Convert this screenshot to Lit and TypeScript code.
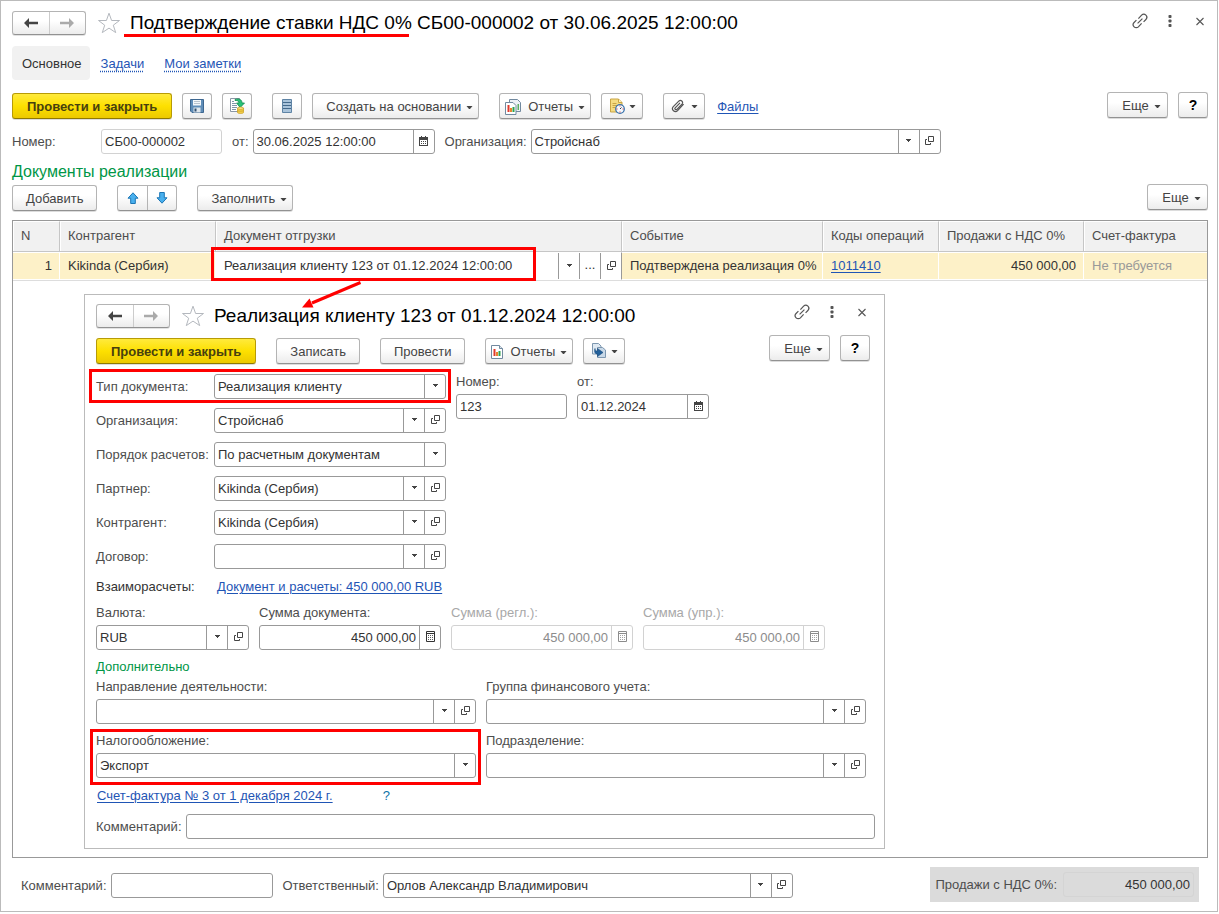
import { LitElement, html, css, svg, nothing, TemplateResult } from "lit";
import { customElement } from "lit/decorators.js";
import { classMap } from "lit/directives/class-map.js";

type Addon = "drop" | "more" | "open" | "calendar" | "calc";

interface FieldOptions {
  id: string;
  label?: string;
  value?: string;
  size: string;
  addons?: Addon[];
  stacked?: boolean;
  wideLabel?: string;
  right?: boolean;
  pale?: boolean;
  disabled?: boolean;
}

const icon = (w: number, h: number, body: unknown) =>
  html`<svg class="icon" width=${w} height=${h} viewBox="0 0 ${w} ${h}" aria-hidden="true">${body}</svg>`;

const icons = {
  back: icon(14, 10, svg`<path d="M0 5 5 0v3.7h9v2.6H5V10z" fill="#444"/>`),
  forward: icon(14, 10, svg`<path d="M14 5 9 0v3.7H0v2.6h9V10z" fill="#aaa"/>`),
  star: icon(24, 22, svg`<path d="M12 1.2 14.6 8.5H22.5L16.3 13.2 18.7 20.6 12 16.1 5.3 20.6 7.7 13.2 1.5 8.5H9.4z" fill="#fff" stroke="#b4b8be"/>`),
  link: icon(16, 16, svg`<g fill="none" stroke="#555" stroke-width="1.2"><path d="M6.400 5.600 9.600 2.200a3 3 0 0 1 4.300 4.300L11.600 8.800"/><path d="M9.600 10.400 6.400 13.800a3 3 0 0 1-4.300-4.300L4.400 7.200"/><path d="M5.600 10.400l4.800-4.800"/></g>`),
  dots: icon(16, 16, svg`<g fill="#555"><rect x="6.500" y="2" width="3" height="3" rx=".8"/><rect x="6.500" y="6.500" width="3" height="3" rx=".8"/><rect x="6.500" y="11" width="3" height="3" rx=".8"/></g>`),
  close: icon(16, 16, svg`<path d="M4.500 5l7 7M11.500 5l-7 7" stroke="#555" stroke-width="1.100"/>`),
  caret: icon(7, 4, svg`<path d="M.5 0h6L4 3H3z" fill="#444"/>`),
  smallCaret: icon(5, 3, svg`<path d="M0 0h5v1H4v1H3v1H2V2H1V1H0z" fill="#444"/>`),
  open: icon(9, 9, svg`<g fill="none" stroke="#444"><path d="M3.500.5h5v5h-5z"/><path d="M2 3.500H.5v5h5V7"/></g>`),
  calendar: icon(9, 10, svg`<path d="M0 1h9v9H0z" fill="#444"/><path d="M1 4h7v5H1z" fill="#fff"/><path d="M2 0h1v2H2zM6 0h1v2H6z" fill="#444"/><path d="M2 5h1v1H2zM4 5h1v1H4zM6 5h1v1H6zM2 7h1v1H2zM4 7h1v1H4zM6 7h1v1H6z" fill="#444"/>`),
  calc: icon(9, 11, svg`<path d="M.5.5h8v10h-8z" fill="none" stroke="currentColor"/><path d="M1 2h7v1H1z" fill="currentColor"/><path d="M2 4h1v1H2zM4 4h1v1H4zM6 4h1v1H6zM2 6h1v1H2zM4 6h1v1H4zM6 6h1v1H6zM2 8h1v1H2zM4 8h1v1H4zM6 8h1v1H6z" fill="currentColor" opacity=".8"/>`),
  save: icon(14, 14, svg`<path d="M.5.5h13v13H2L.5 12z" fill="#5f8db8" stroke="#3d6790"/><path d="M3 1h8v5.500H3z" fill="#f4f7fa"/><path d="M4 2.500h6M4 4.500h6" stroke="#b9c4cf"/><path d="M3.500 8.500h7v5h-7z" fill="#dfe6ec"/><path d="M4.500 9.500h2v3h-2z" fill="#2f4f70"/>`),
  post: icon(16, 16, svg`<path d="M1.500.5h9v13h-9z" fill="#fff" stroke="#8a97a5"/><path d="M3 3.500h2M3 5.500h4M3 7.500h5M3 9.500h5M3 11.500h4" stroke="#8195aa"/><path d="M6 1.500c4-1.500 7 0 7 3.500h2.500L11.200 9.500 7.500 5H10c0-1.800-1-2.700-4-2.500z" fill="#27c277" stroke="#128a4e" stroke-width=".8"/><path d="M8.500 10v4.500c0 1.300 6 1.300 6 0V10z" fill="#f2cf4a" stroke="#c89b1e" stroke-width=".7"/><ellipse cx="11.500" cy="10.200" rx="3" ry="1.100" fill="#ffec97" stroke="#c89b1e" stroke-width=".7"/><path d="M8.500 12.300c0 1.200 6 1.200 6 0" fill="none" stroke="#c89b1e" stroke-width=".7"/>`),
  register: icon(10, 14, svg`<path d="M.5.5h9v13h-9z" fill="#a9c3da" stroke="#5f84a5"/><path d="M1 3.500h8M1 6.500h8M1 9.500h8" stroke="#44698b" stroke-width="1.200"/>`),
  report: icon(12, 14, svg`<path d="M.5.5h8l3 3v10H.5z" fill="#fff" stroke="#71899f"/><path d="M8.500.5v3h3" fill="#dde5ec" stroke="#71899f"/><path d="M2.500 4h2v7h-2z" fill="#e03a2d"/><path d="M5 7h2v4H5z" fill="#e8862e"/><path d="M7.500 6h2v5h-2z" fill="#2ea44f"/>`),
  reports: icon(16, 16, svg`<path d="M4.500.5h8l3 3v9h-11z" fill="#eef2f6" stroke="#71899f"/><path d="M12.500 5h1.500v6h-1.500z" fill="#5cae64"/><path d="M.5 3.500h7.500l3 3v9H.5z" fill="#fff" stroke="#71899f"/><path d="M2.500 6h2v7h-2z" fill="#e03a2d"/><path d="M5 9h2v4H5z" fill="#e8862e"/><path d="M7.500 8h2v5h-2z" fill="#2ea44f"/>`),
  reminder: icon(16, 16, svg`<path d="M1.500 1h8L13 4.500V14H1.500z" fill="#f5dc82" stroke="#c9a545"/><path d="M9.500 1v3.500H13" fill="#fff2bd" stroke="#c9a545"/><path d="M3.500 5.500h4M3.500 7.500h5M3.500 9.500h3" stroke="#c9a545"/><circle cx="11" cy="11" r="4.300" fill="#f5fafe" stroke="#3c74ad" stroke-width="1.300"/><path d="M11 11l1.500-1.500" stroke="#334" fill="none"/><path d="M10.500 7.500h1v1h-1zM10.500 13.500h1v1h-1zM7.500 10.500h1v1h-1zM13.500 10.500h1v1h-1z" fill="#d33"/>`),
  clip: icon(14, 14, svg`<path d="M12.600 5.200 6.600 11.600a2.900 2.900 0 0 1-4.300-3.900L8 1.900a2.200 2.200 0 0 1 3.200 2.900L5.900 10.300a1.100 1.100 0 0 1-1.700-1.500L9 3.900" fill="none" stroke="#555" stroke-width="1.200"/>`),
  send: icon(16, 16, svg`<path d="M1.500.5h6l2.500 2.500v8h-8.500z" fill="#dfe9f2" stroke="#7d97b0"/><path d="M6.500 4.500h5l3 2.500v7.500h-8z" fill="#c9d9e8" stroke="#7d97b0"/><path d="M4 5.500c0 2 .8 2.500 2.500 2.500V5.500L12 9.500l-5.500 4V11C4 11 3 9 4 5.500z" fill="#24619b" stroke="#174a7c" stroke-width=".6"/>`),
  up: icon(12, 12, svg`<path d="M6 .8 11 6.200H8.300v5.300H3.700V6.200H1z" fill="#49b0ee" stroke="#1b76b5"/>`),
  down: icon(12, 12, svg`<path d="M6 11.200 11 5.800H8.300V.5H3.700v5.300H1z" fill="#49b0ee" stroke="#1b76b5"/>`),
  arrow: icon(64, 30, svg`<path d="M60.500 1.500 12 22" stroke="#f00" stroke-width="3"/><path d="M2 26.500 9.500 17.500 13.500 26.500z" fill="#f00"/>`),
};

const addonTitles: Record<Addon, string> = {
  drop: "Выбрать из списка",
  more: "Показать все",
  open: "Открыть",
  calendar: "Календарь",
  calc: "Калькулятор",
};

const addonIcons: Record<Addon, unknown> = {
  drop: icons.smallCaret,
  more: "...",
  open: icons.open,
  calendar: icons.calendar,
  calc: icons.calc,
};

@customElement("app-root")
export class AppRoot extends LitElement {
  static styles = css`
    :host {
      display: block;
      box-sizing: border-box;
      min-height: 100vh;
      padding: 0 1px 2px 0;
      background: #fff;
      color: #4d4d4d;
      font: 13px/16px "Liberation Sans", Arial, sans-serif;
    }
    * { box-sizing: border-box; }
    button, input, select { font: inherit; color: inherit; margin: 0; }
    .icon { display: block; flex: none; }
    a { color: #1f55b5; text-underline-offset: 2px; }

    .page {
      display: flex;
      flex-direction: column;
      border: 1px solid #bbb;
      padding: 10px 9px 9px 11px;
    }
    .head { display: flex; align-items: flex-start; min-height: 24px; }
    .nav, .updown {
      display: flex;
      border: 1px solid #b4b4b4;
      border-bottom-color: #929292;
      border-radius: 3px;
      background: linear-gradient(#fff 40%, #ececec);
      box-shadow: 0 1px 0 #e2e2e2;
    }
    .nav { width: 74px; height: 24px; }
    .updown { width: 60px; height: 26px; }
    .nav button, .updown button {
      flex: 1;
      display: grid;
      place-items: center;
      padding: 0;
      border: 0;
      background: none;
    }
    .nav button + button { border-left: 1px solid #ccc; }
    .updown button + button { border-left: 1px solid #b4b4b4; }
    .star { margin: 1px 9px 0 11px; padding: 0; border: 0; background: none; }
    h1 {
      flex: 1;
      margin: 0;
      color: #000;
      font-size: 19px;
      line-height: 24px;
      font-weight: 400;
    }
    .marked { position: relative; }
    .marked::after {
      content: "";
      position: absolute;
      left: -6px;
      right: 3px;
      bottom: -4px;
      height: 3px;
      background: #f00;
    }
    .tools { display: flex; gap: 14px; padding-top: 2px; }
    .tools button { padding: 0; border: 0; background: none; }

    .tabs { display: flex; align-items: center; gap: 20px; margin-top: 11px; }
    .tab-current {
      padding: 10px 8px 8px 10px;
      margin-right: -9px;
      border-radius: 4px;
      background: #f1f1f1;
      color: #333;
    }
    .tabs a { padding-top: 2px; text-decoration: underline dotted; text-underline-offset: 3px; }

    .toolbar { display: flex; justify-content: space-between; align-items: flex-start; }
    .page > .toolbar { margin-top: 12px; }
    .page > h2 + .toolbar { margin-top: 2px; }
    .group { display: flex; align-items: center; gap: 10px; padding-top: 1px; }
    .group.right { padding-top: 0; }
    .sep { margin-left: 10px; }
    .btn {
      display: flex;
      align-items: center;
      justify-content: center;
      height: 26px;
      min-width: 61px;
      padding: 1px 13px 0;
      border: 1px solid #b4b4b4;
      border-bottom-color: #929292;
      border-radius: 3px;
      background: linear-gradient(#fff 40%, #ececec);
      box-shadow: 0 1px 0 #dcdcdc;
      color: #444;
      white-space: nowrap;
    }
    .btn .caret { margin: 2px -8px 0 5px; }
    .btn .lead { margin: 0 7px 0 -8px; }
    .btn.square { width: 30px; min-width: 30px; padding: 0; }
    .btn.pair { width: 42px; min-width: 42px; padding: 0 6px 0 7px; justify-content: space-between; }
    .btn.pair .caret { margin: 2px 0 0; }
    .btn.help { color: #000; font-weight: 700; font-size: 14px; }
    .btn.main {
      padding: 1px 14px 0;
      border-color: #b79b06;
      border-bottom-color: #8f7900;
      background: linear-gradient(#ffea3c, #fde000 50%, #ecc900);
      color: #47400f;
      font-weight: 700;
    }
    .files { margin-left: 2px; padding-top: 1px; }

    .fields { display: flex; gap: 10px; margin-top: 10px; }
    h2 { margin: 8px 0 0; color: #009646; font-size: 16px; line-height: 20px; font-weight: 400; }

    .field { display: flex; align-items: center; gap: 4px; min-width: 0; }
    .field.stacked { flex-direction: column; align-items: stretch; }
    .field label { white-space: nowrap; }
    .field.label-number label { min-width: 85px; }
    .field.label-form label { min-width: 114px; }
    .box {
      display: flex;
      min-width: 0;
      height: 25px;
      border: 1px solid #999;
      border-radius: 3px;
      background: #fff;
      color: #333;
      overflow: hidden;
    }
    .box input, .box select {
      flex: 1;
      min-width: 0;
      width: 100%;
      height: 23px;
      padding: 0 3px;
      border: 0;
      outline: 0;
      background: none;
      appearance: none;
    }
    .box.right input { text-align: right; }
    .box.pale { border-color: #d2d2d2; }
    .box.disabled { border-color: #d2d2d2; color: #8c8c8c; }
    .box.disabled .addon { border-color: #d2d2d2; }
    .field.off label { color: #a8a8a8; }
    .addon {
      flex: none;
      width: 21px;
      display: grid;
      place-items: center;
      padding: 0 0 2px;
      border: 0;
      border-left: 1px solid #999;
      background: none;
      color: inherit;
      line-height: 16px;
    }
    .choice { display: grid; }
    .choice > * { grid-area: 1 / 1; }
    .choice .addon { justify-self: end; pointer-events: none; }
    .w-number { width: 121px; }
    .w-stamp { width: 182px; }
    .w-long { width: 410px; }
    .w-form { width: 232px; }
    .w-short { width: 111px; }
    .w-date { width: 132px; }
    .w-currency { width: 153px; }
    .w-comment { width: 162px; }
    .w-fill { width: 100%; }

    .panel { margin-top: 9px; border: 1px solid #999; }
    table { width: 100%; border-collapse: separate; border-spacing: 0; table-layout: fixed; }
    th, td { padding: 0 7px 0 8px; text-align: left; font-weight: 400; white-space: nowrap; }
    th {
      height: 31px;
      padding-bottom: 1px;
      border-top: 1px solid #fff;
      border-bottom: 1px solid #c6c6c6;
      border-right: 1px solid #c6c6c6;
      background: #f1f1f1;
      box-shadow: inset 1px 0 0 #fff;
    }
    td {
      height: 28px;
      border: 0 solid #fff;
      border-width: 1px 1px 1px 0;
      background: #fdf1c8;
      box-shadow: 0 1px 0 #ddd;
      color: #333;
    }
    th:last-child, td:last-child { border-right: 0; }
    td.num { text-align: right; }
    td.muted { color: #999; }
    td.edit { position: relative; padding: 0; background: #fff; border-right-color: #999; }
    .cell { display: flex; height: 26px; }
    .cell input { flex: 1; min-width: 0; padding: 0 8px; border: 0; outline: 0; background: none; }
    .c-n { width: 47px; }
    .c-agent { width: 156px; }
    .c-doc { width: 406px; }
    .c-event { width: 201px; }
    .c-code { width: 116px; }
    .c-sales { width: 145px; }
    .frame { position: absolute; border: 3px solid #f00; pointer-events: none; }
    .frame-doc { inset: -6px 85px -2px -5px; }
    .pointer { position: absolute; left: 84px; top: 28px; z-index: 2; pointer-events: none; }

    .canvas { padding: 14px 8px 8px 71px; }
    .window {
      max-width: 801px;
      padding: 9px 9px 9px 11px;
      border: 1px solid #bbb;
      background: #fff;
    }
    .window .tools { padding: 0 5px 0 0; }
    .window .toolbar { margin-top: 7px; padding-right: 5px; }
    .window .group { padding-top: 3px; }
    .window .group.right { padding-top: 0; }
    .form { display: flex; gap: 10px; margin-top: 10px; }
    .rows { display: flex; flex-direction: column; gap: 9px; }
    .pairs { display: flex; gap: 10px; align-items: flex-start; }
    .highlight { position: relative; }
    .frame-type { inset: -5px -5px -4px -7px; }
    .frame-tax { inset: -4px -5px -7px -6px; }
    .link-row { display: flex; margin-top: 10px; color: #333; }
    .settle { min-width: 121px; }
    .sums { display: flex; gap: 10px; margin-top: 10px; }
    h3 { margin: 9px 0 4px; color: #009646; font: inherit; }
    .grid {
      display: grid;
      grid-template-columns: 1fr 1fr;
      gap: 9px 10px;
      padding-right: 9px;
    }
    .invoice { padding-left: 1px; gap: 50px; }
    .invoice .hint { color: #0d72a8; padding: 0; border: 0; background: none; }
    .note { margin-top: 10px; }

    .footer { display: flex; justify-content: space-between; align-items: flex-start; padding: 9px 9px 0; }
    .footer .fields { margin-top: 6px; }
    .total {
      display: flex;
      align-items: center;
      gap: 6px;
      padding: 5px;
      background: #dbdbdb;
    }
    .total output {
      width: 131px;
      padding: 4px 3px 3px;
      border: 1px solid #d4d4d4;
      border-radius: 3px;
      text-align: right;
      color: #333;
    }
  `;

  private addon(kind: Addon, disabled = false) {
    return html`<button class="addon" type="button" title=${addonTitles[kind]} ?disabled=${disabled}>${addonIcons[kind]}</button>`;
  }

  private field(o: FieldOptions): TemplateResult {
    const wrap = {
      field: true,
      stacked: !!o.stacked,
      off: !!o.disabled,
      "w-fill": o.size === "w-fill",
      "label-number": o.wideLabel === "number",
      "label-form": o.wideLabel === "form",
    };
    const box = {
      box: true,
      right: !!o.right,
      pale: !!o.pale,
      disabled: !!o.disabled,
      [o.size]: true,
    };
    return html`<div class=${classMap(wrap)}>
      <label for=${o.id}>${o.label}</label>
      <div class=${classMap(box)}>
        <input id=${o.id} type="text" .value=${o.value ?? ""} ?disabled=${!!o.disabled} />
        ${(o.addons ?? []).map((a) => this.addon(a, o.disabled))}
      </div>
    </div>`;
  }

  private choice(o: FieldOptions): TemplateResult {
    const wrap = { field: true, stacked: !!o.stacked, "label-form": o.wideLabel === "form" };
    return html`<div class=${classMap(wrap)}>
      <label for=${o.id}>${o.label}</label>
      <div class="box choice ${o.size}">
        <select id=${o.id}><option>${o.value}</option></select>
        <span class="addon">${icons.smallCaret}</span>
      </div>
    </div>`;
  }

  private menuButton(text: string, lead?: unknown) {
    return html`<button class="btn" type="button">
      ${lead ? html`<span class="lead">${lead}</span>` : nothing}${text}<span class="caret">${icons.caret}</span>
    </button>`;
  }

  private head(title: unknown) {
    return html`<div class="head">
      <div class="nav">
        <button type="button" aria-label="Назад">${icons.back}</button>
        <button type="button" aria-label="Вперед">${icons.forward}</button>
      </div>
      <button class="star" type="button" aria-label="В избранное">${icons.star}</button>
      <h1>${title}</h1>
      <div class="tools">
        <button type="button" aria-label="Ссылка">${icons.link}</button>
        <button type="button" aria-label="Меню">${icons.dots}</button>
        <button type="button" aria-label="Закрыть">${icons.close}</button>
      </div>
    </div>`;
  }

  private renderTable() {
    return html`<table>
      <colgroup>
        <col class="c-n" /><col class="c-agent" /><col class="c-doc" /><col class="c-event" />
        <col class="c-code" /><col class="c-sales" /><col />
      </colgroup>
      <thead>
        <tr>
          <th>N</th><th>Контрагент</th><th>Документ отгрузки</th><th>Событие</th>
          <th>Коды операций</th><th>Продажи с НДС 0%</th><th>Счет-фактура</th>
        </tr>
      </thead>
      <tbody>
        <tr>
          <td class="num">1</td>
          <td>Kikinda (Сербия)</td>
          <td class="edit">
            <div class="cell">
              <input type="text" aria-label="Документ отгрузки" .value=${"Реализация клиенту 123 от 01.12.2024 12:00:00"} />
              ${this.addon("drop")}${this.addon("more")}${this.addon("open")}
            </div>
            <span class="frame frame-doc"></span>
            <span class="pointer">${icons.arrow}</span>
          </td>
          <td>Подтверждена реализация 0%</td>
          <td><a href="#">1011410</a></td>
          <td class="num">450 000,00</td>
          <td class="muted">Не требуется</td>
        </tr>
      </tbody>
    </table>`;
  }

  private renderWindow() {
    const ref: Addon[] = ["drop", "open"];
    return html`<section class="window">
      ${this.head("Реализация клиенту 123 от 01.12.2024 12:00:00")}
      <div class="toolbar">
        <div class="group">
          <button class="btn main" type="button">Провести и закрыть</button>
          <button class="btn sep" type="button">Записать</button>
          <button class="btn sep" type="button">Провести</button>
          <span class="sep">${this.menuButton("Отчеты", icons.report)}</span>
          <button class="btn pair" type="button" aria-label="Отправить">${icons.send}<span class="caret">${icons.caret}</span></button>
        </div>
        <div class="group right">
          ${this.menuButton("Еще")}
          <button class="btn square help" type="button">?</button>
        </div>
      </div>
      <div class="form">
        <div class="rows">
          <div class="highlight">
            ${this.choice({ id: "kind", label: "Тип документа:", value: "Реализация клиенту", size: "w-form", wideLabel: "form" })}
            <span class="frame frame-type"></span>
          </div>
          ${this.field({ id: "org", label: "Организация:", value: "Стройснаб", size: "w-form", wideLabel: "form", addons: ref })}
          ${this.choice({ id: "order", label: "Порядок расчетов:", value: "По расчетным документам", size: "w-form", wideLabel: "form" })}
          ${this.field({ id: "partner", label: "Партнер:", value: "Kikinda (Сербия)", size: "w-form", wideLabel: "form", addons: ref })}
          ${this.field({ id: "agent", label: "Контрагент:", value: "Kikinda (Сербия)", size: "w-form", wideLabel: "form", addons: ref })}
          ${this.field({ id: "contract", label: "Договор:", size: "w-form", wideLabel: "form", addons: ref })}
        </div>
        <div class="pairs">
          ${this.field({ id: "doc-number", label: "Номер:", value: "123", size: "w-short", stacked: true })}
          ${this.field({ id: "doc-date", label: "от:", value: "01.12.2024", size: "w-date", stacked: true, addons: ["calendar"] })}
        </div>
      </div>
      <div class="link-row">
        <span class="settle">Взаиморасчеты:</span>
        <a href="#">Документ и расчеты: 450 000,00 RUB</a>
      </div>
      <div class="sums">
        ${this.field({ id: "currency", label: "Валюта:", value: "RUB", size: "w-currency", stacked: true, addons: ref })}
        ${this.field({ id: "sum", label: "Сумма документа:", value: "450 000,00", size: "w-stamp", stacked: true, right: true, addons: ["calc"] })}
        ${this.field({ id: "sum-regl", label: "Сумма (регл.):", value: "450 000,00", size: "w-stamp", stacked: true, right: true, disabled: true, addons: ["calc"] })}
        ${this.field({ id: "sum-upr", label: "Сумма (упр.):", value: "450 000,00", size: "w-stamp", stacked: true, right: true, disabled: true, addons: ["calc"] })}
      </div>
      <h3>Дополнительно</h3>
      <div class="grid">
        ${this.field({ id: "direction", label: "Направление деятельности:", size: "w-fill", stacked: true, addons: ref })}
        ${this.field({ id: "group", label: "Группа финансового учета:", size: "w-fill", stacked: true, addons: ref })}
        <div class="highlight">
          ${this.choice({ id: "tax", label: "Налогообложение:", value: "Экспорт", size: "w-fill", stacked: true })}
          <span class="frame frame-tax"></span>
        </div>
        ${this.field({ id: "unit", label: "Подразделение:", size: "w-fill", stacked: true, addons: ref })}
      </div>
      <div class="link-row invoice">
        <a href="#">Счет-фактура № 3 от 1 декабря 2024 г.</a>
        <button class="hint" type="button">?</button>
      </div>
      <div class="note">${this.field({ id: "note", label: "Комментарий:", size: "w-fill" })}</div>
    </section>`;
  }

  render() {
    return html`<main class="page">
      ${this.head(html`<span class="marked">Подтверждение ставки НДС 0%</span> СБ00-000002 от 30.06.2025 12:00:00`)}
      <nav class="tabs">
        <span class="tab-current">Основное</span>
        <a href="#">Задачи</a>
        <a href="#">Мои заметки</a>
      </nav>
      <div class="toolbar">
        <div class="group">
          <button class="btn main" type="button">Провести и закрыть</button>
          <button class="btn square" type="button" aria-label="Записать">${icons.save}</button>
          <button class="btn square" type="button" aria-label="Провести">${icons.post}</button>
          <button class="btn square sep" type="button" aria-label="Движения документа">${icons.register}</button>
          ${this.menuButton("Создать на основании")}
          <span class="sep">${this.menuButton("Отчеты", icons.reports)}</span>
          <button class="btn pair" type="button" aria-label="Напоминания">${icons.reminder}<span class="caret">${icons.caret}</span></button>
          <button class="btn pair sep" type="button" aria-label="Присоединенные файлы">${icons.clip}<span class="caret">${icons.caret}</span></button>
          <a class="files" href="#">Файлы</a>
        </div>
        <div class="group right">
          ${this.menuButton("Еще")}
          <button class="btn square help" type="button">?</button>
        </div>
      </div>
      <div class="fields">
        ${this.field({ id: "number", label: "Номер:", value: "СБ00-000002", size: "w-number", wideLabel: "number", pale: true })}
        ${this.field({ id: "date", label: "от:", value: "30.06.2025 12:00:00", size: "w-stamp", addons: ["calendar"] })}
        ${this.field({ id: "company", label: "Организация:", value: "Стройснаб", size: "w-long", addons: ["drop", "open"] })}
      </div>
      <h2>Документы реализации</h2>
      <div class="toolbar">
        <div class="group">
          <button class="btn" type="button">Добавить</button>
          <div class="updown sep">
            <button type="button" aria-label="Переместить вверх">${icons.up}</button>
            <button type="button" aria-label="Переместить вниз">${icons.down}</button>
          </div>
          <span class="sep">${this.menuButton("Заполнить")}</span>
        </div>
        <div class="group right">${this.menuButton("Еще")}</div>
      </div>
      <div class="panel">
        ${this.renderTable()}
        <div class="canvas">${this.renderWindow()}</div>
      </div>
      <footer class="footer">
        <div class="fields">
          ${this.field({ id: "comment", label: "Комментарий:", size: "w-comment" })}
          ${this.field({ id: "owner", label: "Ответственный:", value: "Орлов Александр Владимирович", size: "w-long", addons: ["drop", "open"] })}
        </div>
        <div class="total">
          <label for="total">Продажи с НДС 0%:</label>
          <output id="total">450 000,00</output>
        </div>
      </footer>
    </main>`;
  }
}
